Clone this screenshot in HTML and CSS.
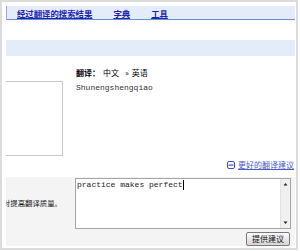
FILE: index.html
```html
<!DOCTYPE html>
<html lang="zh-CN">
<head>
<meta charset="utf-8">
<title>翻译</title>
<link rel="stylesheet" href="styles.css">
</head>
<body>
<div class="frame">
  <div class="nav">
    <a class="nav-link" href="#">经过翻译的搜索结果</a>
    <a class="nav-link" href="#">字典</a>
    <a class="nav-link" href="#">工具</a>
  </div>
  <div class="band"></div>
  <div class="main">
    <div class="src-box"></div>
    <div class="result">
      <div class="lang-line"><b class="lang-label">翻译：</b><span class="lang-from">中文</span><span class="lang-arrow">»</span><span>英语</span></div>
      <div class="mono">Shunengshengqiao</div>
    </div>
  </div>
  <div class="better">
    <svg class="collapse-icon" width="8" height="8" viewBox="0 0 8 8"><rect x="0.5" y="0.5" width="7" height="7" rx="1.5" fill="#fff" stroke="#3b4fc4"/><rect x="1.5" y="3.5" width="5" height="1.2" fill="#3b4fc4"/></svg>
    <a class="better-link" href="#">更好的翻译建议</a>
  </div>
  <div class="panel">
    <div class="label"><span>对提高翻译质量。</span></div>
    <div class="ta">
      <div class="ta-text">practice makes perfect<span class="caret"></span></div>
      <div class="sb">
        <svg width="9" height="8" viewBox="0 0 9 8"><path d="M2.5 5.5 L4.5 3 L6.5 5.5 Z" fill="#222"/></svg>
        <svg width="9" height="8" viewBox="0 0 9 8"><path d="M2.5 2.5 L4.5 5 L6.5 2.5 Z" fill="#222"/></svg>
      </div>
    </div>
    <div class="btn-row"><button class="btn" type="button">提供建议</button></div>
  </div>
</div>
</body>
</html>
```

FILE: styles.css
```css
* { box-sizing: border-box; }
html, body { margin: 0; padding: 0; background: #fff; }
body { font-family: "Noto Sans CJK SC", "Noto Sans", sans-serif; font-size: 8px; color: #000; }

.frame {
  width: 298px;
  height: 250px;
  border: 2px solid #dcdcdc;
  padding: 4px 1px 0 4px;
  overflow: hidden;
}

.nav {
  height: 14px;
  background: #e5ecf9;
  border-left: 1px solid #93aee6;
  border-bottom: 1px solid #6b90da;
  display: flex;
  align-items: center;
  gap: 21px;
  padding-left: 10px;
}
.nav-link {
  color: #1c24b0;
  font-weight: bold;
  font-size: 8.4px;
  line-height: 10px;
  text-decoration: underline;
}

.band {
  margin-top: 20px;
  height: 16px;
  background: #e5ecf9;
}

.main {
  display: grid;
  grid-template-columns: 57px 1fr;
  column-gap: 13px;
  height: 100px;
}
.src-box {
  margin-top: 25px;
  height: 75px;
  border-top: 1px solid #c8c8c8;
  border-right: 1px solid #c8c8c8;
  border-bottom: 1px solid #c8c8c8;
}
.result { margin-top: 12px; }
.lang-line { line-height: 10px; display: flex; }
.lang-label { font-weight: bold; margin-right: 3px; }
.lang-arrow { margin: 0 3px 0 6px; }
.mono {
  margin-top: 5px;
  font-family: "Liberation Mono", "DejaVu Sans Mono", monospace;
  font-size: 8px;
  line-height: 10px;
  color: #333;
}

.better {
  margin-top: 4px;
  height: 10px;
  display: flex;
  justify-content: flex-end;
  align-items: center;
  gap: 3px;
  padding-right: 1px;
}
.collapse-icon { display: block; }
.better-link {
  color: #4a5bc8;
  line-height: 10px;
  text-decoration: underline;
}

.panel {
  margin-top: 7px;
  height: 69px;
  background: #f4f4f4;
  display: grid;
  grid-template-columns: 56px 216px;
  column-gap: 13px;
  grid-template-rows: 51px 14px;
  row-gap: 3px;
  padding-top: 1px;
}
.label {
  display: flex;
  justify-content: flex-end;
  align-items: center;
  overflow: hidden;
  white-space: nowrap;
  padding-bottom: 1px;
}
.label span { flex: none; font-size: 7.4px; line-height: 10px; color: #111; }

.ta {
  display: flex;
  background: #fff;
  border: 1px solid #a4a4a4;
}
.ta-text {
  flex: 1;
  padding: 1px 0 0 1px;
  font-family: "Liberation Mono", "DejaVu Sans Mono", monospace;
  font-size: 8px;
  line-height: 10px;
  color: #222;
  white-space: pre;
}
.caret {
  display: inline-block;
  width: 1px;
  height: 10px;
  background: #000;
  vertical-align: top;
}
.sb {
  width: 10px;
  background: #f0f0f0;
  border-left: 1px solid #e2e2e2;
  display: flex;
  flex-direction: column;
  justify-content: space-between;
  padding: 1px 0;
}
.sb svg { display: block; }

.btn-row {
  grid-column: 2;
  display: flex;
  justify-content: flex-end;
  padding-right: 1px;
}
.btn {
  width: 44px;
  height: 14px;
  padding: 0;
  margin: 0;
  border: 1px solid #7a7a7a;
  border-radius: 2px;
  background: linear-gradient(#fdfdfd, #e6e6e6 55%, #d6d6d6);
  font-family: "Noto Sans CJK SC", sans-serif;
  font-size: 8px;
  line-height: 12px;
  color: #111;
}
```
